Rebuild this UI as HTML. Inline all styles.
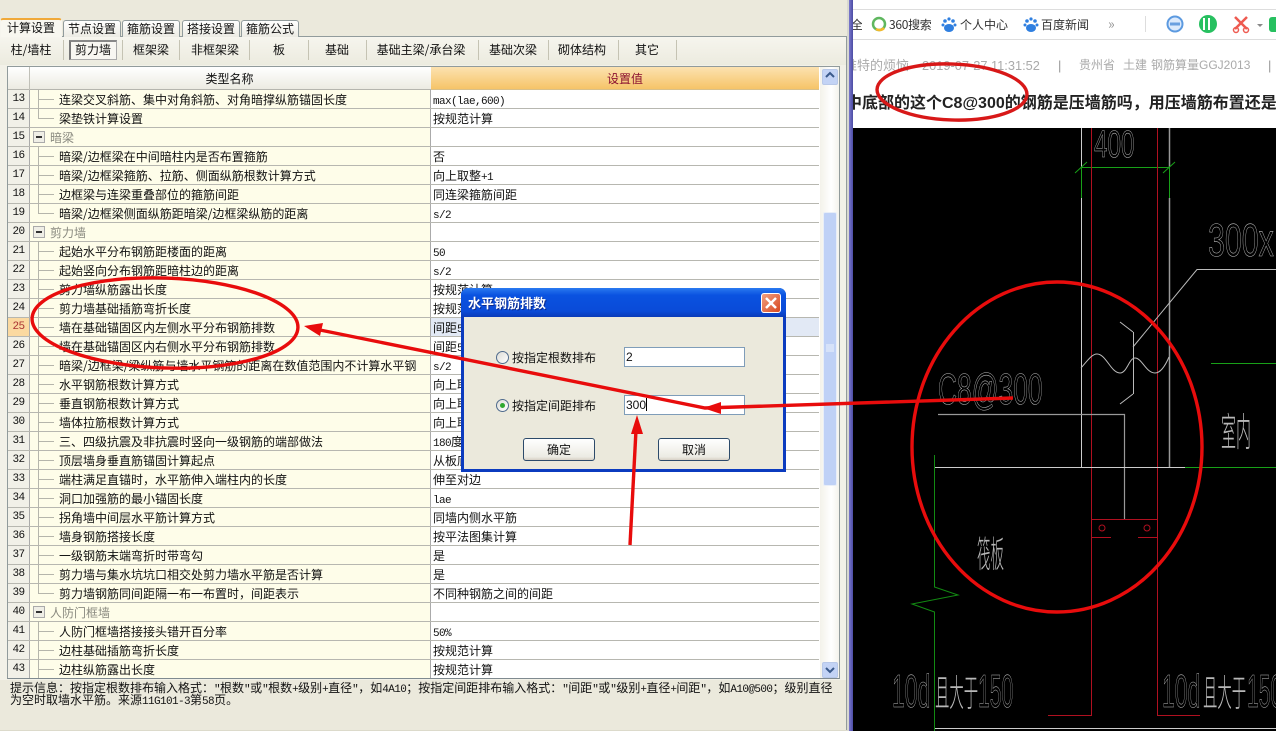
<!DOCTYPE html>
<html><head><meta charset="utf-8"><style>
html,body{margin:0;padding:0;width:1276px;height:731px;overflow:hidden;background:#ebe9dc}
*{box-sizing:border-box}
body{font:12px/14px "WenQuanYi Zen Hei","Noto Sans CJK SC",sans-serif;color:#111;position:relative}
tt{font-family:"Liberation Mono",monospace;font-size:11px;letter-spacing:-.6px;line-height:0}
.a{position:absolute}
.tab{position:absolute;top:20px;height:17px;border:1px solid #919b9c;border-bottom:0;border-radius:3px 3px 0 0;background:linear-gradient(#fff,#ecebe3);text-align:center;line-height:16px;font-size:12px}
.st{position:absolute;top:43px;transform:translateX(-50%);white-space:nowrap}
.sp{position:absolute;top:40px;width:1px;height:20px;background:#c5c3b3}
#rows{position:absolute;left:8px;top:90px;width:811px;height:588px;overflow:hidden}
.r{position:relative;height:19px;border-bottom:1px solid #b7b7b0;background:linear-gradient(90deg,#f1f0e8 0,#f1f0e8 21px,#aaa 21px,#aaa 22px,#fefde9 22px,#fefde9 422px,#aaa 422px,#aaa 423px,#fff 423px);white-space:nowrap}
.r b{position:absolute;left:0;width:21px;text-align:center;font:11px/12px "Liberation Mono",monospace;letter-spacing:-.6px;top:3px}
.r i{position:absolute;left:30px;top:-1px;width:1px;height:20px;background:#b5b5ab}
.r i:after{content:"";position:absolute;left:1px;top:10px;width:15px;height:1px;background:#b5b5ab}
.r s{position:absolute;left:51px;top:3px;text-decoration:none}
.r u{position:absolute;left:425px;top:3px;text-decoration:none}
.g s{left:42px;color:#8a8a80}
.g em{position:absolute;left:25px;top:3px;width:12px;height:12px;border:1px solid #aaa;background:#efeee6}
.g em:after{content:"";position:absolute;left:2px;top:4px;width:6px;height:2px;background:#333}
.e i{height:11px}
.btn{position:absolute;top:438px;width:72px;height:23px;border:1px solid #2c4a6a;border-radius:3px;background:linear-gradient(#fff,#ecebe3 85%,#d6d0c5);text-align:center;line-height:21px}
.inp{position:absolute;left:624px;width:121px;height:20px;background:#fff;border:1px solid #7f9db9;padding:2px 1px;font-family:"Liberation Sans",sans-serif}
.rad{position:absolute;left:496px;width:13px;height:13px;border-radius:50%;border:1px solid #4f6b8d;background:linear-gradient(135deg,#dcdcd6,#fff)}
.cad{fill:none;stroke:#bbb;stroke-width:.55;font-family:"Liberation Sans",sans-serif}
.cj{fill:#b8b8b8;font-family:"Noto Sans CJK SC",sans-serif;font-weight:300}
.top{position:absolute;white-space:nowrap}
</style></head><body>

<div class="a" style="left:0;top:36px;width:847px;height:695px;background:#f2f1e8;border-top:1px solid #919b9c;border-right:1px solid #919b9c"></div>
<div class="a" style="left:0;top:37px;width:846px;height:28px;background:linear-gradient(#f6f5ee,#ecebdf)"></div>
<div class="a" style="left:0;top:680px;width:846px;height:50px;background:#ebe9dc"></div>
<div class="a" style="left:0;top:730px;width:847px;height:1px;background:#dcdacb"></div>

<div class="tab" style="left:0;top:18px;width:62px;height:19px;background:#f8f7f0;border-color:#f6f5ee;border-top:2px solid #f0a93a;line-height:15px">计算设置</div>
<div class="tab" style="left:63px;width:58px">节点设置</div>
<div class="tab" style="left:122px;width:58px">箍筋设置</div>
<div class="tab" style="left:182px;width:58px">搭接设置</div>
<div class="tab" style="left:241px;width:58px">箍筋公式</div>

<div class="a" style="left:69px;top:40px;width:48px;height:20px;border:1px solid #aaa;border-left:2px solid #777;border-top:2px solid #888;background:#f8f7f2"></div>
<div class="st" style="left:31px">柱/墙柱</div><div class="st" style="left:93px">剪力墙</div><div class="st" style="left:151px">框架梁</div><div class="st" style="left:215px">非框架梁</div><div class="st" style="left:279px">板</div><div class="st" style="left:337px">基础</div><div class="st" style="left:421px">基础主梁/承台梁</div><div class="st" style="left:513px">基础次梁</div><div class="st" style="left:582px">砌体结构</div><div class="st" style="left:647px">其它</div>
<div class="sp" style="left:63px"></div><div class="sp" style="left:122px"></div><div class="sp" style="left:179px"></div><div class="sp" style="left:249px"></div><div class="sp" style="left:308px"></div><div class="sp" style="left:366px"></div><div class="sp" style="left:478px"></div><div class="sp" style="left:548px"></div><div class="sp" style="left:618px"></div><div class="sp" style="left:676px"></div>

<!-- table frame -->
<div class="a" style="left:7px;top:66px;width:833px;height:613px;border:1px solid #919b9c;border-bottom:1px solid #7f8a90;background:#fff"></div>
<div class="a" style="left:8px;top:67px;width:423px;height:23px;background:linear-gradient(#fff,#ecebe2);border-bottom:1px solid #b5b5ae;text-align:center;line-height:23px;padding-left:20px">类型名称</div>
<div class="a" style="left:29px;top:67px;width:1px;height:23px;background:#c0c0b8"></div>
<div class="a" style="left:431px;top:67px;width:388px;height:23px;background:linear-gradient(#fce2b0,#f6c468);text-align:center;line-height:23px;color:#8b1030;border-bottom:1px solid #d8c08a">设置值</div>

<div id="rows">
<div class="r"><b>13</b><i></i><s>连梁交叉斜筋、集中对角斜筋、对角暗撑纵筋锚固长度</s><u><tt>max(lae,600)</tt></u></div>
<div class="r e"><b>14</b><i></i><s>梁垫铁计算设置</s><u>按规范计算</u></div>
<div class="r g"><b>15</b><em></em><s>暗梁</s></div>
<div class="r"><b>16</b><i></i><s>暗梁/边框梁在中间暗柱内是否布置箍筋</s><u>否</u></div>
<div class="r"><b>17</b><i></i><s>暗梁/边框梁箍筋、拉筋、侧面纵筋根数计算方式</s><u>向上取整<tt>+1</tt></u></div>
<div class="r"><b>18</b><i></i><s>边框梁与连梁重叠部位的箍筋间距</s><u>同连梁箍筋间距</u></div>
<div class="r e"><b>19</b><i></i><s>暗梁/边框梁侧面纵筋距暗梁/边框梁纵筋的距离</s><u><tt>s/2</tt></u></div>
<div class="r g"><b>20</b><em></em><s>剪力墙</s></div>
<div class="r"><b>21</b><i></i><s>起始水平分布钢筋距楼面的距离</s><u><tt>50</tt></u></div>
<div class="r"><b>22</b><i></i><s>起始竖向分布钢筋距暗柱边的距离</s><u><tt>s/2</tt></u></div>
<div class="r"><b>23</b><i></i><s>剪力墙纵筋露出长度</s><u>按规范计算</u></div>
<div class="r"><b>24</b><i></i><s>剪力墙基础插筋弯折长度</s><u>按规范计算</u></div>
<div class="r" style="background:linear-gradient(90deg,#fbd9a0 0,#fbd9a0 21px,#aaa 21px,#aaa 22px,#fefde9 22px,#fefde9 422px,#aaa 422px,#aaa 423px,#e2e9f5 423px)"><b style="color:#a33">25</b><i></i><s>墙在基础锚固区内左侧水平分布钢筋排数</s><u>间距<tt>500</tt></u></div>
<div class="r"><b>26</b><i></i><s>墙在基础锚固区内右侧水平分布钢筋排数</s><u>间距<tt>500</tt></u></div>
<div class="r"><b>27</b><i></i><s>暗梁/边框梁/梁纵筋与墙水平钢筋的距离在数值范围内不计算水平钢</s><u><tt>s/2</tt></u></div>
<div class="r"><b>28</b><i></i><s>水平钢筋根数计算方式</s><u>向上取整<tt>+1</tt></u></div>
<div class="r"><b>29</b><i></i><s>垂直钢筋根数计算方式</s><u>向上取整<tt>+1</tt></u></div>
<div class="r"><b>30</b><i></i><s>墙体拉筋根数计算方式</s><u>向上取整<tt>+1</tt></u></div>
<div class="r"><b>31</b><i></i><s>三、四级抗震及非抗震时竖向一级钢筋的端部做法</s><u><tt>180</tt>度弯钩</u></div>
<div class="r"><b>32</b><i></i><s>顶层墙身垂直筋锚固计算起点</s><u>从板底开始计算</u></div>
<div class="r"><b>33</b><i></i><s>端柱满足直锚时，水平筋伸入端柱内的长度</s><u>伸至对边</u></div>
<div class="r"><b>34</b><i></i><s>洞口加强筋的最小锚固长度</s><u><tt>lae</tt></u></div>
<div class="r"><b>35</b><i></i><s>拐角墙中间层水平筋计算方式</s><u>同墙内侧水平筋</u></div>
<div class="r"><b>36</b><i></i><s>墙身钢筋搭接长度</s><u>按平法图集计算</u></div>
<div class="r"><b>37</b><i></i><s>一级钢筋末端弯折时带弯勾</s><u>是</u></div>
<div class="r"><b>38</b><i></i><s>剪力墙与集水坑坑口相交处剪力墙水平筋是否计算</s><u>是</u></div>
<div class="r e"><b>39</b><i></i><s>剪力墙钢筋同间距隔一布一布置时，间距表示</s><u>不同种钢筋之间的间距</u></div>
<div class="r g"><b>40</b><em></em><s>人防门框墙</s></div>
<div class="r"><b>41</b><i></i><s>人防门框墙搭接接头错开百分率</s><u><tt>50%</tt></u></div>
<div class="r"><b>42</b><i></i><s>边柱基础插筋弯折长度</s><u>按规范计算</u></div>
<div class="r"><b>43</b><i></i><s>边柱纵筋露出长度</s><u>按规范计算</u></div>
</div>

<!-- scrollbar -->
<div class="a" style="left:820px;top:67px;width:19px;height:611px;background:linear-gradient(90deg,#f3f2ea,#fff 60%,#f4f3ec)"></div>
<div class="a" style="left:822px;top:69px;width:16px;height:16px;border:1px solid #b8c8e8;border-radius:2px;background:#c3d3f5"></div>
<div class="a" style="left:822px;top:662px;width:16px;height:16px;border:1px solid #b8c8e8;border-radius:2px;background:#c3d3f5"></div>
<div class="a" style="left:823px;top:212px;width:14px;height:274px;border:1px solid #e8eef8;border-radius:2px;background:#bfd1f6"></div>
<svg class="a" style="left:820px;top:67px" width="19" height="611"><path d="M6 10l4-4 4 4M6 601l4 4 4-4" fill="none" stroke="#3a5a8c" stroke-width="2"/><path d="M6 278h8M6 280h8M6 282h8M6 284h8" stroke="#eef3fc"/></svg>

<div class="a" style="left:10px;top:682px;width:830px;line-height:12px;font-size:12px;white-space:nowrap">提示信息：按指定根数排布输入格式：<tt>"</tt>根数<tt>"</tt>或<tt>"</tt>根数<tt>+</tt>级别<tt>+</tt>直径<tt>"</tt>，如<tt>4A10</tt>；按指定间距排布输入格式：<tt>"</tt>间距<tt>"</tt>或<tt>"</tt>级别<tt>+</tt>直径<tt>+</tt>间距<tt>"</tt>，如<tt>A10@500</tt>；级别直径<br>为空时取墙水平筋。来源<tt>11G101-3</tt>第<tt>58</tt>页。</div>

<!-- right side -->
<div class="a" style="left:847px;top:0;width:2px;height:731px;background:#d8d8d0"></div>
<div class="a" style="left:853px;top:0;width:423px;height:128px;background:#fff"></div>
<div class="a" style="left:853px;top:128px;width:423px;height:603px;background:#000"></div>
<div class="a" style="left:849px;top:0;width:4px;height:731px;background:linear-gradient(90deg,#7a78cc,#4c4ca4)"></div>
<div class="a" style="left:853px;top:9px;width:423px;height:1px;background:#ddd"></div>
<div class="a" style="left:853px;top:39px;width:423px;height:1px;background:#ddd"></div>

<div class="top" style="left:853px;top:18px;color:#333;width:9px;overflow:hidden"><span style="margin-left:-2px;display:block">全</span></div>
<div class="top" style="left:889px;top:18px;color:#333;letter-spacing:-.3px">360搜索</div>
<div class="top" style="left:960px;top:18px;color:#333">个人中心</div>
<div class="top" style="left:1041px;top:18px;color:#333">百度新闻</div>
<div class="top" style="left:1108px;top:17px;color:#999;font-size:14px">»</div>
<svg class="a" style="left:853px;top:10px" width="423" height="29">
<circle cx="26" cy="14" r="6" fill="none" stroke="#5fb75f" stroke-width="2.500"/><path d="M23 19a6 6 0 0 0 8-1" fill="none" stroke="#f2b92c" stroke-width="2.500"/>
<g fill="#2f7fe0"><ellipse cx="96" cy="18" rx="5" ry="4"/><circle cx="92" cy="11" r="1.800"/><circle cx="100" cy="11" r="1.800"/><circle cx="96" cy="9" r="1.600"/><circle cx="90" cy="15" r="1.500"/><circle cx="102" cy="15" r="1.500"/></g>
<g fill="#2f7fe0"><ellipse cx="178" cy="18" rx="5" ry="4"/><circle cx="174" cy="11" r="1.800"/><circle cx="182" cy="11" r="1.800"/><circle cx="178" cy="9" r="1.600"/><circle cx="172" cy="15" r="1.500"/><circle cx="184" cy="15" r="1.500"/></g>
<path d="M292.500 6v16" stroke="#ddd"/>
<circle cx="322" cy="14" r="7.500" fill="#dceafc" stroke="#5c9ae0" stroke-width="2"/><rect x="317" y="12.500" width="10" height="3" fill="#6aa0e0"/>
<circle cx="355" cy="14" r="9" fill="#27c060"/><path d="M351 8v12M356 8v12" stroke="#fff" stroke-width="2"/>
<path d="M382 7l12 12M394 7l-12 12" stroke="#ee5a50" stroke-width="2.500"/><circle cx="383" cy="20" r="2.500" fill="none" stroke="#ee5a50" stroke-width="1.500"/><circle cx="393" cy="20" r="2.500" fill="none" stroke="#ee5a50" stroke-width="1.500"/>
<path d="M404 14h6l-3 3z" fill="#888"/>
<rect x="416" y="7" width="10" height="15" rx="3" fill="#27c060"/>
</svg>

<div class="a" style="left:853px;top:58px;width:60px;height:15px;overflow:hidden"><div style="position:absolute;left:-9px;top:0;white-space:nowrap;color:#aaa;font:13px/15px 'Liberation Sans','Noto Sans CJK SC',sans-serif">维特的烦恼</div></div>
<div class="top" style="left:922px;top:58px;color:#aaa;font:12.8px/15px 'Liberation Sans',sans-serif">2019-07-27 11:31:52</div>
<div class="top" style="left:1058px;top:58px;color:#999;font:13px/15px 'Liberation Sans',sans-serif">|</div>
<div class="top" style="left:1079px;top:58px;color:#aaa;font:12px/15px 'Liberation Sans','Noto Sans CJK SC',sans-serif">贵州省</div>
<div class="top" style="left:1123px;top:58px;color:#aaa;font:12px/15px 'Liberation Sans','Noto Sans CJK SC',sans-serif">土建</div>
<div class="top" style="left:1151px;top:58px;color:#aaa;font:12px/15px 'Liberation Sans','Noto Sans CJK SC',sans-serif">钢筋算量GGJ2013</div>
<div class="top" style="left:1268px;top:58px;color:#999;font:13px/15px 'Liberation Sans',sans-serif">|</div>
<div class="a" style="left:853px;top:92px;width:423px;height:24px;overflow:hidden"><div style="position:absolute;left:-7px;top:0;white-space:nowrap;font:bold 16px/24px 'Liberation Sans','Noto Sans CJK SC',sans-serif;color:#222">中底部的这个C8@300的钢筋是压墙筋吗，用压墙筋布置还是</div></div>

<svg class="a" style="left:853px;top:128px" width="423" height="603" viewBox="853 128 423 603">
<g fill="none" stroke-width="1">
<path d="M1081.500 128V167M1081.500 198V467" stroke="#ccc"/>
<path d="M1169.500 128V167M1169.500 198V467" stroke="#999" stroke-width="1.500"/>
<path d="M1081.500 167V198M1169.500 167V198M1081 167.500H1170M1075 173l12-11M1163 173l12-11" stroke="#18a018"/>
<path d="M1091.500 128V715M1157.500 128V715M1091 519.500H1158M1091 537.500H1111M1138 537.500H1158M1048 715.500H1092M1157 715.500H1200" stroke="#b01020"/>
<circle cx="1102" cy="528" r="3" stroke="#b01020"/><circle cx="1147" cy="528" r="3" stroke="#b01020"/>
<path d="M1133 347L1197 269.500H1276M1133.500 332V394M1120 322l13 10M1133 394l-13 10M1081 368C1088 360 1092 354 1097 354C1106 354 1111 373 1120 373C1127 373 1129 358 1135 358C1142 358 1146 373 1155 373C1161 373 1166 364 1169 357" stroke="#bbb"/>
<path d="M938 414.500H1124.500V519" stroke="#999" stroke-width="1.200"/>
<path d="M934 467.500H1185" stroke="#ccc"/>
<path d="M934 728.500H1276" stroke="#ccc"/>
<path d="M1185 467.500H1276M1211 363.500H1276" stroke="#18a018"/>
<path d="M934.500 455V587L958 595L912 604L934.500 612V731" stroke="#128a12"/>
</g>
<text class="cad" transform="translate(1094 157) scale(.64 1)" font-size="38">400</text>
<text class="cad" transform="translate(1208 256) scale(.66 1)" font-size="46">300x.</text>
<text class="cad" transform="translate(938 404) scale(.6 1)" font-size="44">C8@300</text>
<text class="cad" transform="translate(892 707) scale(.5 1)" font-size="46">10d</text>
<text class="cad" transform="translate(1162 707) scale(.5 1)" font-size="46">10d</text>
<text class="cj" transform="translate(935 706) scale(.45 1.15)" font-size="32">且大于</text>
<text class="cj" transform="translate(1203 706) scale(.45 1.15)" font-size="32">且大于</text>
<text class="cad" transform="translate(978 707) scale(.46 1)" font-size="46">150</text>
<text class="cad" transform="translate(1247 707) scale(.46 1)" font-size="46">150</text>
<text class="cj" transform="translate(1221 446) scale(.5 1.3)" font-size="30">室内</text>
<text class="cj" transform="translate(977 567) scale(.5 1.35)" font-size="27">筏板</text>
</svg>

<!-- dialog -->
<div class="a" style="left:461px;top:288px;width:325px;height:184px;background:#0b3bbf;border-radius:7px 7px 0 0"></div>
<div class="a" style="left:461px;top:288px;width:325px;height:29px;border-radius:7px 7px 0 0;background:linear-gradient(#2a7af0,#0a52e0 25%,#0a4bd8 80%,#0a3ab8)"></div>
<div class="a" style="left:464px;top:317px;width:319px;height:152px;background:#ebe9dc"></div>
<div class="a" style="left:468px;top:296px;color:#fff;font-weight:bold;font-size:13px;text-shadow:1px 1px 0 #0a2a90">水平钢筋排数</div>
<div class="a" style="left:761px;top:293px;width:20px;height:20px;border:1px solid #fff;border-radius:3px;background:linear-gradient(135deg,#f0a080,#d84820)"></div>
<svg class="a" style="left:761px;top:293px" width="20" height="20"><path d="M5 5l10 10M15 5L5 15" stroke="#fff" stroke-width="2.500"/></svg>
<div class="rad" style="top:351px"></div>
<div class="rad" style="top:399px"></div>
<div class="a" style="left:500px;top:403px;width:5px;height:5px;border-radius:50%;background:#2fa82f"></div>
<div class="a" style="left:512px;top:351px">按指定根数排布</div>
<div class="a" style="left:512px;top:399px">按指定间距排布</div>
<div class="inp" style="top:347px">2</div>
<div class="inp" style="top:395px">300<span style="display:inline-block;width:1px;height:13px;background:#000;vertical-align:-2px"></span></div>
<div class="btn" style="left:523px">确定</div>
<div class="btn" style="left:658px">取消</div>

<!-- annotations -->
<svg class="a" style="left:0;top:0" width="1276" height="731">
<g fill="none" stroke="#e80c0c">
<ellipse cx="952" cy="92" rx="75" ry="28" stroke-width="3.400" stroke="#d81818" transform="rotate(2 952 92)"/>
<ellipse cx="1057" cy="447" rx="145" ry="165" stroke-width="3.400"/>
<ellipse cx="165" cy="323" rx="133" ry="45" stroke-width="3.400" transform="rotate(2 165 323)"/>
<path d="M1013 398L705 408L320 330" stroke-width="3.400"/>
<path d="M630 545L636 430" stroke-width="3.400"/>
</g>
<g fill="#e80c0c">
<path d="M703 408L721 402V414Z"/>
<path d="M304 326L323 323L320 336Z"/>
<path d="M637 415L631 434H643Z"/>
</g>
</svg>
</body></html>
